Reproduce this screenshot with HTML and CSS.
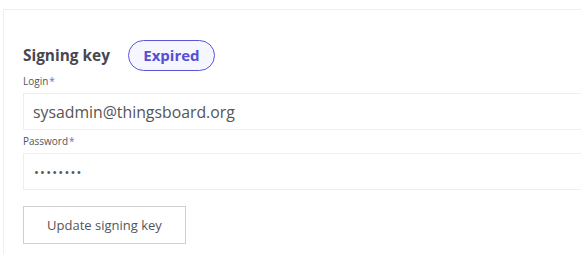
FILE: index.html
```html
<!DOCTYPE html>
<html>
<head>
<meta charset="utf-8">
<link rel="stylesheet" href="styles.css">
</head>
<body>
<div class="card">
  <div class="header">
    <h2 class="title">Signing key</h2>
    <span class="badge">Expired</span>
  </div>
  <label class="label">Login<span class="req">*</span></label>
  <div class="field"><span class="value">sysadmin@thingsboard.org</span></div>
  <label class="label">Password<span class="req">*</span></label>
  <div class="field"><span class="dots">••••••••</span></div>
  <button class="btn">Update signing key</button>
</div>
</body>
</html>
```
FILE: styles.css
```css
html, body {
  margin: 0;
  padding: 0;
  background: #ffffff;
  height: 100%;
}
body {
  font-family: "Open Sans", "Noto Sans", sans-serif;
  overflow: hidden;
}
.card {
  box-sizing: border-box;
  margin: 9px 0 0 3px;
  border-top: 1px solid #efefef;
  border-left: 1px solid #efefef;
  padding: 30px 0 0 19px;
  height: calc(100% - 9px);
}
.header {
  display: flex;
  align-items: center;
  gap: 18px;
  height: 30px;
}
.title {
  margin: 0;
  font-size: 15.4px;
  font-weight: 700;
  color: #474752;
}
.badge {
  box-sizing: border-box;
  height: 31px;
  width: 87px;
  border: 1px solid #5b57d1;
  border-radius: 16px;
  background: #f6f6ff;
  color: #5450d4;
  font-weight: 700;
  font-size: 15px;
  display: flex;
  align-items: center;
  justify-content: center;
}
.label {
  display: block;
  font-size: 10px;
  color: #555;
  margin-top: 4px;
  line-height: 14px;
  height: 19px;
}
.req {
  color: #6d69e0;
  margin-left: 1px;
}
.field {
  box-sizing: border-box;
  height: 37px;
  border: 1px solid #eeeeee;
  border-right: none;
  padding-left: 9px;
  display: flex;
  align-items: center;
}
.value {
  font-size: 15.8px;
  color: #555;
}
.dots {
  font-size: 13px;
  color: #555;
  letter-spacing: 1.2px;
  margin-left: 1px;
}
.btn {
  display: block;
  margin-top: 16px;
  box-sizing: border-box;
  width: 163px;
  height: 38px;
  background: #fff;
  border: 1px solid #cfcfcf;
  font-family: "Open Sans", "Noto Sans", sans-serif;
  font-size: 13px;
  color: #555;
  padding: 0;
}
```
